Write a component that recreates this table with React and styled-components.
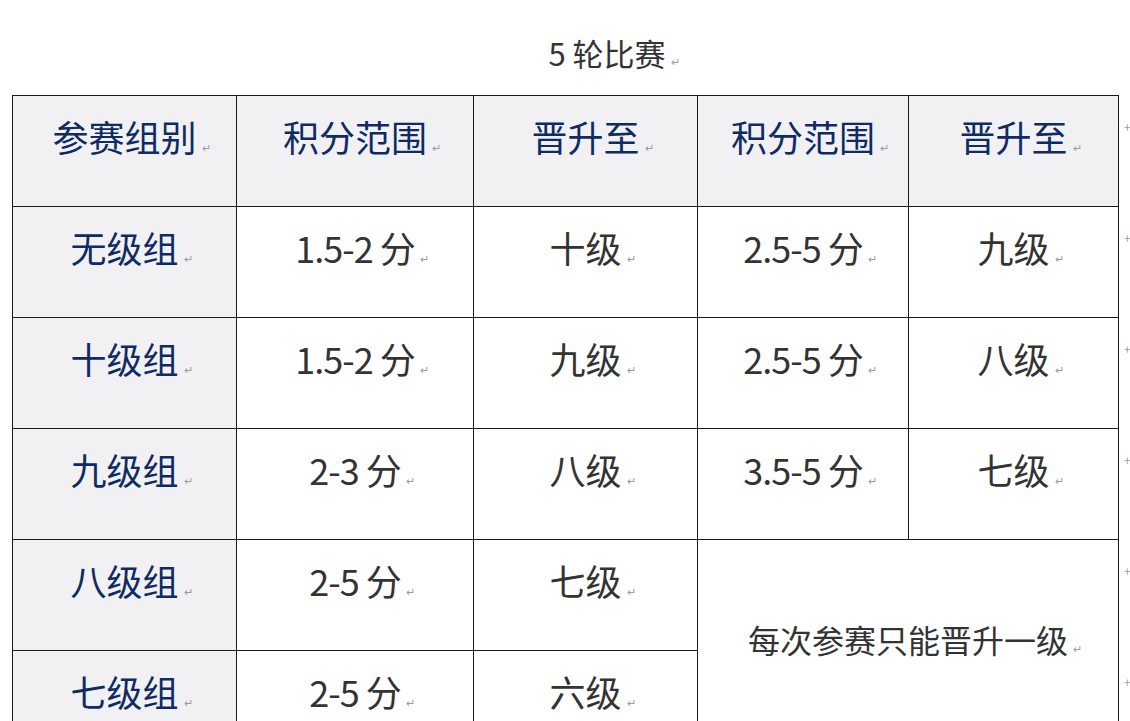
import React from "react";
import styled, { createGlobalStyle } from "styled-components";

const GlobalStyle = createGlobalStyle`
  html, body {
    margin: 0;
    padding: 0;
    background: #ffffff;
  }
  body {
    font-family: "Noto Sans CJK SC", "Noto Sans", sans-serif;
    color: #333333;
  }
`;

const Page = styled.div`
  width: 1130px;
  height: 721px;
  overflow: hidden;
  padding-left: 12px;
  box-sizing: border-box;
`;

const Title = styled.div`
  height: 95px;
  box-sizing: border-box;
  padding: 28px 0 0 84px;
  text-align: center;
  width: 1106px;
  font-size: 31px;
  line-height: 50px;
  color: #333333;
`;

const Table = styled.table`
  border-collapse: collapse;
  table-layout: fixed;
  width: 1118px;
`;

const Row = styled.tr`
  height: 111px;
`;

const Cell = styled.td`
  padding: ${(p) => (p.$merged ? "75px" : "13px")} 0 0;
  vertical-align: top;
  text-align: center;
  border: 1px solid #1a1a1a;
  background: ${(p) => (p.$shade ? "#f1f1f3" : "#ffffff")};
  color: ${(p) => (p.$navy ? "#0f2b63" : "#333333")};
  font-size: ${(p) => (p.$merged ? "32px" : "36px")};
  line-height: ${(p) => (p.$merged ? "48px" : "54px")};
  letter-spacing: ${(p) => (p.$tight ? "-1px" : "0")};
  white-space: nowrap;
`;

const EndCell = styled.td`
  padding: 23px 0 0 5px;
  vertical-align: top;
  border: none;
  font-size: 12px;
  line-height: 16px;
  color: #a0a0a0;
`;

const Mark = styled.span`
  display: inline-block;
  width: 0;
  overflow: visible;
  font-size: 11px;
  line-height: 11px;
  letter-spacing: 0;
  color: #9a9a9a;
  vertical-align: baseline;
  &::before {
    content: "↵";
    margin-left: 5px;
  }
`;

const widths = [224, 237, 224, 211, 210, 12];

const header = ["参赛组别", "积分范围", "晋升至", "积分范围", "晋升至"];

const rows = [
  ["无级组", "1.5-2 分", "十级", "2.5-5 分", "九级"],
  ["十级组", "1.5-2 分", "九级", "2.5-5 分", "八级"],
  ["九级组", "2-3 分", "八级", "3.5-5 分", "七级"],
];

const lower = [
  ["八级组", "2-5 分", "七级"],
  ["七级组", "2-5 分", "六级"],
];

const isScore = (s) => /\d/.test(s);

function Text({ children }) {
  return (
    <>
      {children}
      <Mark />
    </>
  );
}

export default function App() {
  return (
    <Page>
      <GlobalStyle />
      <Title>
        5 轮比赛
        <Mark />
      </Title>
      <Table>
        <colgroup>
          {widths.map((w, i) => (
            <col key={i} style={{ width: w }} />
          ))}
        </colgroup>
        <tbody>
          <Row>
            {header.map((h, i) => (
              <Cell key={i} $shade $navy>
                <Text>{h}</Text>
              </Cell>
            ))}
            <EndCell>+</EndCell>
          </Row>
          {rows.map((r, ri) => (
            <Row key={ri}>
              {r.map((c, i) => (
                <Cell key={i} $shade={i === 0} $navy={i === 0} $tight={isScore(c)}>
                  <Text>{c}</Text>
                </Cell>
              ))}
              <EndCell>+</EndCell>
            </Row>
          ))}
          {lower.map((r, ri) => (
            <Row key={"l" + ri}>
              {r.map((c, i) => (
                <Cell key={i} $shade={i === 0} $navy={i === 0} $tight={isScore(c)}>
                  <Text>{c}</Text>
                </Cell>
              ))}
              {ri === 0 && (
                <Cell colSpan={2} rowSpan={2} $merged>
                  <Text>每次参赛只能晋升一级</Text>
                </Cell>
              )}
              <EndCell>+</EndCell>
            </Row>
          ))}
        </tbody>
      </Table>
    </Page>
  );
}
